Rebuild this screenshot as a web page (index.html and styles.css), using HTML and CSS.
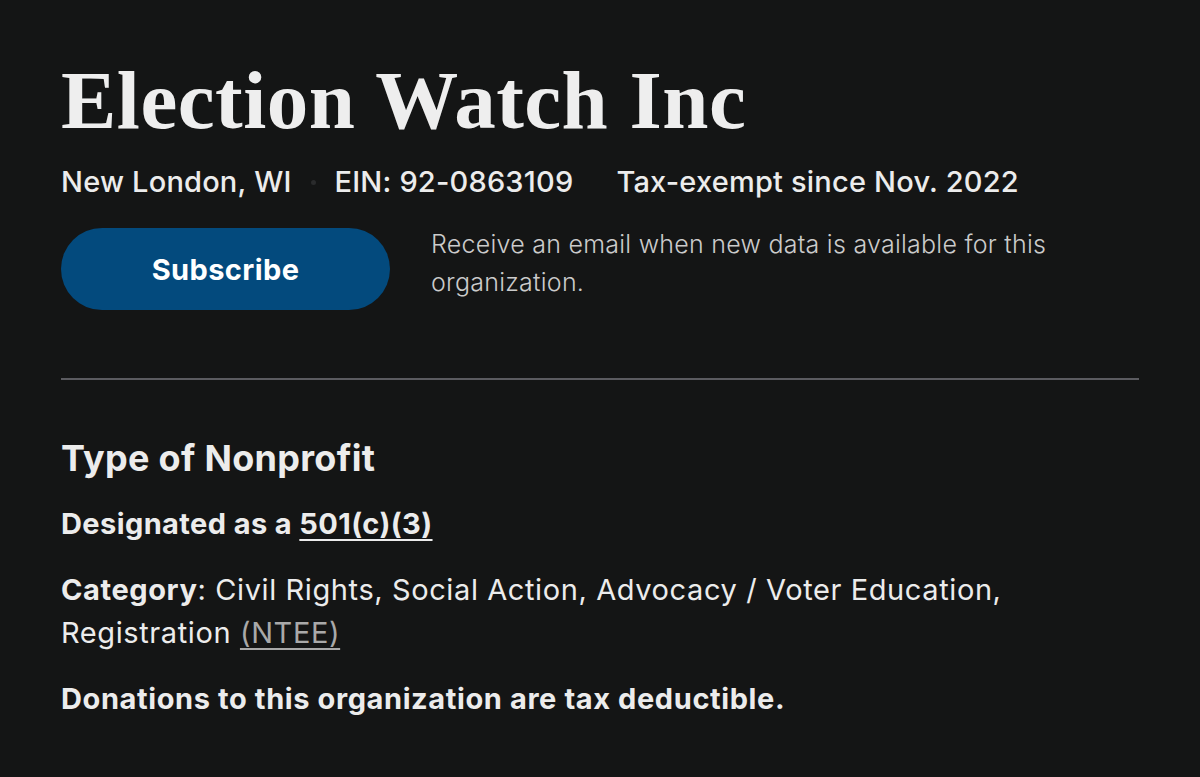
FILE: index.html
```html
<!DOCTYPE html>
<html lang="en">
<head>
<meta charset="utf-8">
<title>Election Watch Inc</title>
<link rel="stylesheet" href="styles.css">
</head>
<body>
<main class="page">
  <header class="org-header">
    <h1 class="org-title">Election Watch Inc</h1>
    <div class="org-meta">
      <span class="meta-item">New London, WI</span>
      <span class="meta-dot"></span>
      <span class="meta-item">EIN: 92-0863109</span>
      <span class="meta-dot meta-dot-hidden"></span>
      <span class="meta-item">Tax-exempt since Nov. 2022</span>
    </div>
    <div class="subscribe-row">
      <button class="subscribe-btn" type="button">Subscribe</button>
      <p class="subscribe-note">Receive an email when new data is available for this organization.</p>
    </div>
  </header>
  <hr class="divider">
  <section class="nonprofit-type">
    <h2 class="section-title">Type of Nonprofit</h2>
    <p class="designation">Designated as a <a href="#" class="strong-link">501(c)(3)</a></p>
    <p class="category"><strong>Category</strong>: Civil Rights, Social Action, Advocacy / Voter Education, Registration <a href="#" class="muted-link">(NTEE)</a></p>
    <p class="deductible">Donations to this organization are tax deductible.</p>
  </section>
</main>
</body>
</html>
```

FILE: styles.css
```css
html, body {
  margin: 0;
  padding: 0;
  background: #141515;
}
body {
  font-family: Inter, "Noto Sans", sans-serif;
  color: #ececec;
}
.page {
  padding: 52px 61px 0 61px;
}
.org-title {
  font-family: "Liberation Serif", "DejaVu Serif", serif;
  font-weight: 700;
  font-size: 83px;
  line-height: 96px;
  margin: 0;
  color: #eeeeee;
  letter-spacing: 0.5px;
}
.org-meta {
  display: flex;
  align-items: center;
  gap: 19px;
  margin-top: 18px;
  font-size: 29px;
  font-weight: 500;
  letter-spacing: 0.2px;
  line-height: 32px;
}
.meta-dot {
  width: 5px;
  height: 5px;
  border-radius: 50%;
  background: #2a2b2c;
}
.meta-dot-hidden {
  background: transparent;
}
.subscribe-row {
  display: flex;
  align-items: flex-start;
  gap: 41px;
  margin-top: 30px;
}
.subscribe-btn {
  flex: none;
  width: 329px;
  height: 82px;
  border: 0;
  border-radius: 41px;
  background: #034a7d;
  color: #ffffff;
  font-family: Inter, "Noto Sans", sans-serif;
  font-weight: 700;
  font-size: 29px;
  letter-spacing: 0.4px;
  cursor: pointer;
}
.subscribe-note {
  margin: -3px 0 0 0;
  max-width: 660px;
  font-size: 25px;
  letter-spacing: 0.25px;
  line-height: 38px;
  font-weight: 300;
  color: #cbcbcb;
}
.divider {
  border: 0;
  height: 2px;
  background: #5b5b60;
  margin: 68px 0 0 0;
}
.section-title {
  margin: 56px 0 0 0;
  font-size: 36px;
  line-height: 44px;
  letter-spacing: 0.3px;
  font-weight: 700;
}
.designation {
  margin: 24px 0 0 0;
  font-size: 29px;
  line-height: 40px;
  letter-spacing: 0.4px;
  font-weight: 700;
}
.strong-link {
  color: #ececec;
  text-decoration: underline;
  text-decoration-thickness: 2px;
  text-underline-offset: 5px;
}
.category {
  margin: 24px 0 0 0;
  font-size: 29px;
  line-height: 43px;
  letter-spacing: 0.6px;
  font-weight: 400;
}
.category strong {
  font-weight: 700;
}
.muted-link {
  color: #a9a9a9;
  text-decoration: underline;
  text-underline-offset: 5px;
}
.deductible {
  margin: 25px 0 0 0;
  font-size: 29px;
  line-height: 40px;
  letter-spacing: 0.6px;
  font-weight: 700;
}
```
